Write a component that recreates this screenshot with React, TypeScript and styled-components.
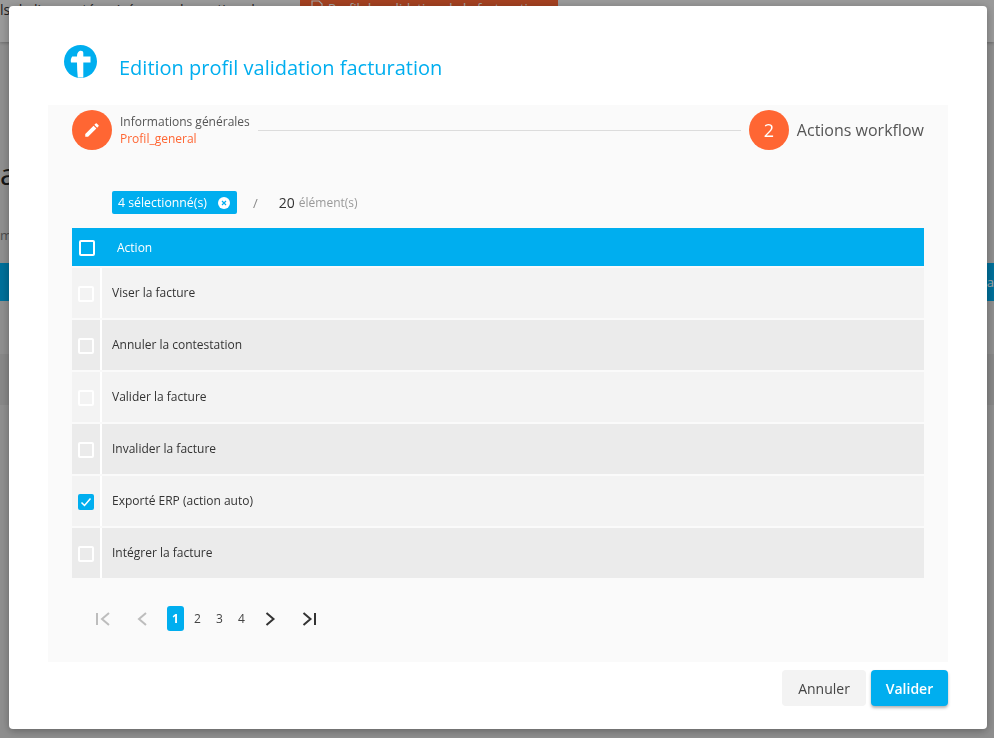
import React from 'react';
import styled, { createGlobalStyle } from 'styled-components';

const GlobalStyle = createGlobalStyle`
  html, body {
    margin: 0;
    padding: 0;
    height: 100%;
    overflow: hidden;
    font-family: "Open Sans", "Liberation Sans", sans-serif;
  }
  * { box-sizing: border-box; }
`;

const BLUE = '#00aeef';
const ORANGE = '#ff6633';

/* page behind the modal */
const Page = styled.div`
  width: 994px;
  height: 738px;
  background: #dfdfdf;
  overflow: hidden;
`;

const TopBar = styled.div`
  height: 42px;
  background: #f1f1f1;
  box-shadow: 0 1px 3px rgba(0, 0, 0, 0.25);
  display: flex;
  align-items: flex-start;
  overflow: hidden;
`;

const TopBarText = styled.span`
  width: 300px;
  font-size: 14px;
  line-height: 18px;
  margin-top: 1px;
  white-space: nowrap;
  overflow: hidden;
  color: #333;
`;

const TopBarButton = styled.div`
  width: 258px;
  height: 30px;
  margin-top: -7px;
  padding-left: 11px;
  background: ${ORANGE};
  color: #fff;
  font-size: 13px;
  line-height: 30px;
  display: flex;
  align-items: center;
  gap: 5px;
  white-space: nowrap;
`;

const PageHeading = styled.div`
  margin-top: 110px;
  height: 44px;
  font-size: 30px;
  line-height: 44px;
  color: #222;
`;

const PageSub = styled.div`
  margin-top: 30px;
  height: 37px;
  font-size: 13px;
  color: #777;
`;

const PageBand = styled.div`
  height: 38px;
  background: ${BLUE};
  color: #fff;
  font-size: 13px;
  line-height: 38px;
  display: flex;
  justify-content: flex-end;
`;

const PageRow = styled.div`
  margin-top: 53px;
  height: 51px;
  background: #d4d4d4;
`;

const Overlay = styled.div`
  position: fixed;
  inset: 0;
  background: rgba(0, 0, 0, 0.36);
  display: flex;
  align-items: flex-start;
  justify-content: flex-start;
  padding: 6px 0 0 9px;
`;

const Modal = styled.div`
  width: 978px;
  height: 723px;
  background: #fff;
  border-radius: 4px;
  box-shadow: 0 2px 8px rgba(0, 0, 0, 0.3);
  padding: 0 39px;
  display: flex;
  flex-direction: column;
`;

const ModalHeader = styled.div`
  height: 99px;
  display: flex;
  align-items: flex-start;
  padding: 39px 0 0 16px;
  gap: 22px;
`;

const ModalTitle = styled.h2`
  margin: 9px 0 0;
  font-size: 20px;
  line-height: 27px;
  font-weight: 400;
  color: ${BLUE};
`;

const Panel = styled.div`
  height: 557px;
  background: #fafafa;
  padding: 5px 24px 0;
  display: flex;
  flex-direction: column;
`;

const Stepper = styled.div`
  display: flex;
  align-items: center;
  height: 40px;
`;

const StepCircle = styled.div`
  width: 40px;
  height: 40px;
  border-radius: 50%;
  background: ${ORANGE};
  color: #fff;
  font-size: 18px;
  display: flex;
  align-items: center;
  justify-content: center;
  flex: none;
`;

const StepInfo = styled.div`
  margin-left: 8px;
  padding-top: 1px;
  display: flex;
  flex-direction: column;
`;

const StepLabel = styled.div`
  font-size: 12px;
  line-height: 16px;
  color: #555;
  white-space: nowrap;
`;

const StepValue = styled.div`
  font-size: 12px;
  line-height: 17px;
  color: ${ORANGE};
`;

const StepLine = styled.div`
  flex: 1;
  height: 1px;
  background: #dcdcdc;
  margin: 0 8px;
`;

const StepTitle = styled.div`
  margin-left: 8px;
  font-size: 16px;
  color: #555;
  white-space: nowrap;
`;

const SelectionBar = styled.div`
  margin-top: 41px;
  height: 23px;
  padding-left: 40px;
  display: flex;
  align-items: center;
`;

const SelectedChip = styled.div`
  width: 125px;
  height: 23px;
  padding: 0 7px 0 6px;
  background: ${BLUE};
  border-radius: 2px;
  color: #fff;
  font-size: 12.3px;
  display: flex;
  align-items: center;
  justify-content: space-between;
  white-space: nowrap;
`;

const ChipClose = styled.span`
  width: 12px;
  height: 12px;
  display: flex;
`;

const Slash = styled.span`
  margin-left: 16px;
  font-size: 13px;
  color: #888;
`;

const Count = styled.span`
  margin-left: 21px;
  font-size: 14px;
  color: #333;
`;

const CountLabel = styled.span`
  margin-left: 4px;
  font-size: 12px;
  color: #999;
`;

const Table = styled.div`
  margin-top: 14px;
  display: flex;
  flex-direction: column;
  gap: 2px;
`;

const HeaderRow = styled.div`
  height: 38px;
  background: ${BLUE};
  display: flex;
  align-items: center;
  padding-left: 7px;
`;

const HeaderCheck = styled.span`
  width: 16px;
  height: 16px;
  margin-top: 2px;
  border-radius: 2px;
  border: 2px solid #fff;
`;

const HeaderLabel = styled.span`
  margin-left: 22px;
  font-size: 12px;
  color: #fff;
`;

const Row = styled.div<{ $alt: boolean }>`
  height: 50px;
  display: flex;
  background: ${(p) => (p.$alt ? '#ebebeb' : '#f3f3f3')};
`;

const CheckCell = styled.div`
  width: 30px;
  flex: none;
  border-right: 2px solid #fff;
  display: flex;
  align-items: center;
  justify-content: center;
  padding-top: 2px;
`;

const LabelCell = styled.div`
  padding-left: 10px;
  padding-bottom: 2px;
  display: flex;
  align-items: center;
  font-size: 12px;
  color: #333;
`;

const Check = styled.span<{ $on?: boolean }>`
  width: 16px;
  height: 16px;
  border-radius: 2px;
  border: 2px solid ${(p) => (p.$on ? BLUE : '#fff')};
  background: ${(p) => (p.$on ? BLUE : 'transparent')};
  display: flex;
  align-items: center;
  justify-content: center;
`;

const Pager = styled.div`
  margin-top: 28px;
  height: 25px;
  display: flex;
  align-items: center;
  padding-left: 20px;
`;

const PagerIcon = styled.span<{ $off?: boolean }>`
  width: 20px;
  height: 20px;
  color: ${(p) => (p.$off ? '#bdbdbd' : '#333')};
  display: flex;
  align-items: center;
  justify-content: center;
`;

const PagerSpacer = styled.span<{ $width: number }>`
  width: ${(p) => p.$width}px;
`;

const PageNumber = styled.span<{ $active?: boolean }>`
  width: 17px;
  height: 25px;
  margin-right: 5px;
  border-radius: 3px;
  font-size: 12px;
  font-weight: ${(p) => (p.$active ? 700 : 400)};
  background: ${(p) => (p.$active ? BLUE : 'transparent')};
  color: ${(p) => (p.$active ? '#fff' : '#444')};
  display: flex;
  align-items: center;
  justify-content: center;
`;

const Footer = styled.div`
  margin-top: 8px;
  display: flex;
  justify-content: flex-end;
  gap: 5px;
`;

const CancelButton = styled.button`
  width: 84px;
  height: 36px;
  border: none;
  border-radius: 4px;
  background: #f3f3f3;
  color: #444;
  font: 400 14px "Open Sans", sans-serif;
`;

const SubmitButton = styled.button`
  width: 77px;
  height: 36px;
  border: none;
  border-radius: 4px;
  background: ${BLUE};
  color: #fff;
  font: 600 14px "Open Sans", sans-serif;
  box-shadow: 0 2px 3px rgba(0, 0, 0, 0.3);
`;

const Logo = () => (
  <svg width="33" height="33" viewBox="0 0 33 33">
    <circle cx="16.5" cy="16.5" r="16.5" fill={BLUE} />
    <path
      d="M15.5 6 c2.2 -0.6 3.8 0.2 3.8 2 v3.5 h7.2 v6 h-7.2 v15 h-5.5 q-0.8 -7 -0.8 -15 h-6 c-0.5 -2 -0.2 -4 1.2 -6 h4.8 c0 -2.5 0.6 -4.5 2.5 -5.5 z"
      fill="#fff"
    />
  </svg>
);

const Pencil = () => (
  <svg width="18" height="18" viewBox="0 0 24 24" fill="#fff">
    <path d="M3 17.25V21h3.75L17.81 9.94l-3.75-3.75L3 17.25zM20.71 7.04a1 1 0 0 0 0-1.41l-2.34-2.34a1 1 0 0 0-1.41 0l-1.83 1.83 3.75 3.75 1.83-1.83z" />
  </svg>
);

const FileIcon = () => (
  <svg width="12" height="16" viewBox="0 0 12 16" fill="none" stroke="#fff" strokeWidth="1.2">
    <path d="M1 1h7l3 3v11H1z" />
  </svg>
);

const CloseDot = () => (
  <svg width="12" height="12" viewBox="0 0 12 12">
    <circle cx="6" cy="6" r="6" fill="#fff" />
    <path d="M4 4l4 4M8 4l-4 4" stroke={BLUE} strokeWidth="1.2" />
  </svg>
);

const Tick = () => (
  <svg width="12" height="12" viewBox="0 0 12 12" fill="none">
    <path d="M1.5 6.5l3 3 6-7" stroke="#fff" strokeWidth="1.5" />
  </svg>
);

const ICON_PATHS = {
  first: ['M5 2v12', 'M17 2l-7 6 7 6'],
  prev: ['M14 2l-7 6 7 6'],
  next: ['M6.5 2l7 6-7 6'],
  last: ['M3.5 2l7 6-7 6', 'M15 2v12'],
};

const PagerGlyph = ({ name }: { name: keyof typeof ICON_PATHS }) => (
  <svg width="20" height="16" viewBox="0 0 20 16" fill="none" stroke="currentColor" strokeWidth="2">
    {ICON_PATHS[name].map((d) => (
      <path key={d} d={d} />
    ))}
  </svg>
);

const actions = [
  { label: 'Viser la facture' },
  { label: 'Annuler la contestation' },
  { label: 'Valider la facture' },
  { label: 'Invalider la facture' },
  { label: 'Exporté ERP (action auto)', checked: true },
  { label: 'Intégrer la facture' },
];

export default function App() {
  return (
    <>
      <GlobalStyle />
      <Page>
        <TopBar>
          <TopBarText>ls de liens catégorisés pour la gestion de</TopBarText>
          <TopBarButton>
            <FileIcon />
            Profil de validation de la facturation
          </TopBarButton>
        </TopBar>
        <PageHeading>a</PageHeading>
        <PageSub>me</PageSub>
        <PageBand>a</PageBand>
        <PageRow />
      </Page>
      <Overlay>
        <Modal>
          <ModalHeader>
            <Logo />
            <ModalTitle>Edition profil validation facturation</ModalTitle>
          </ModalHeader>
          <Panel>
            <Stepper>
              <StepCircle>
                <Pencil />
              </StepCircle>
              <StepInfo>
                <StepLabel>Informations générales</StepLabel>
                <StepValue>Profil_general</StepValue>
              </StepInfo>
              <StepLine />
              <StepCircle>2</StepCircle>
              <StepTitle>Actions workflow</StepTitle>
            </Stepper>
            <SelectionBar>
              <SelectedChip>
                4 sélectionné(s)
                <ChipClose>
                  <CloseDot />
                </ChipClose>
              </SelectedChip>
              <Slash>/</Slash>
              <Count>20</Count>
              <CountLabel>élément(s)</CountLabel>
            </SelectionBar>
            <Table>
              <HeaderRow>
                <HeaderCheck />
                <HeaderLabel>Action</HeaderLabel>
              </HeaderRow>
              {actions.map((action, i) => (
                <Row key={action.label} $alt={i % 2 === 1}>
                  <CheckCell>
                    <Check $on={action.checked}>{action.checked && <Tick />}</Check>
                  </CheckCell>
                  <LabelCell>{action.label}</LabelCell>
                </Row>
              ))}
            </Table>
            <Pager>
              <PagerIcon $off>
                <PagerGlyph name="first" />
              </PagerIcon>
              <PagerSpacer $width={20} />
              <PagerIcon $off>
                <PagerGlyph name="prev" />
              </PagerIcon>
              <PagerSpacer $width={15} />
              <PageNumber $active>1</PageNumber>
              <PageNumber>2</PageNumber>
              <PageNumber>3</PageNumber>
              <PageNumber>4</PageNumber>
              <PagerSpacer $width={5} />
              <PagerIcon>
                <PagerGlyph name="next" />
              </PagerIcon>
              <PagerSpacer $width={20} />
              <PagerIcon>
                <PagerGlyph name="last" />
              </PagerIcon>
            </Pager>
          </Panel>
          <Footer>
            <CancelButton>Annuler</CancelButton>
            <SubmitButton>Valider</SubmitButton>
          </Footer>
        </Modal>
      </Overlay>
    </>
  );
}
